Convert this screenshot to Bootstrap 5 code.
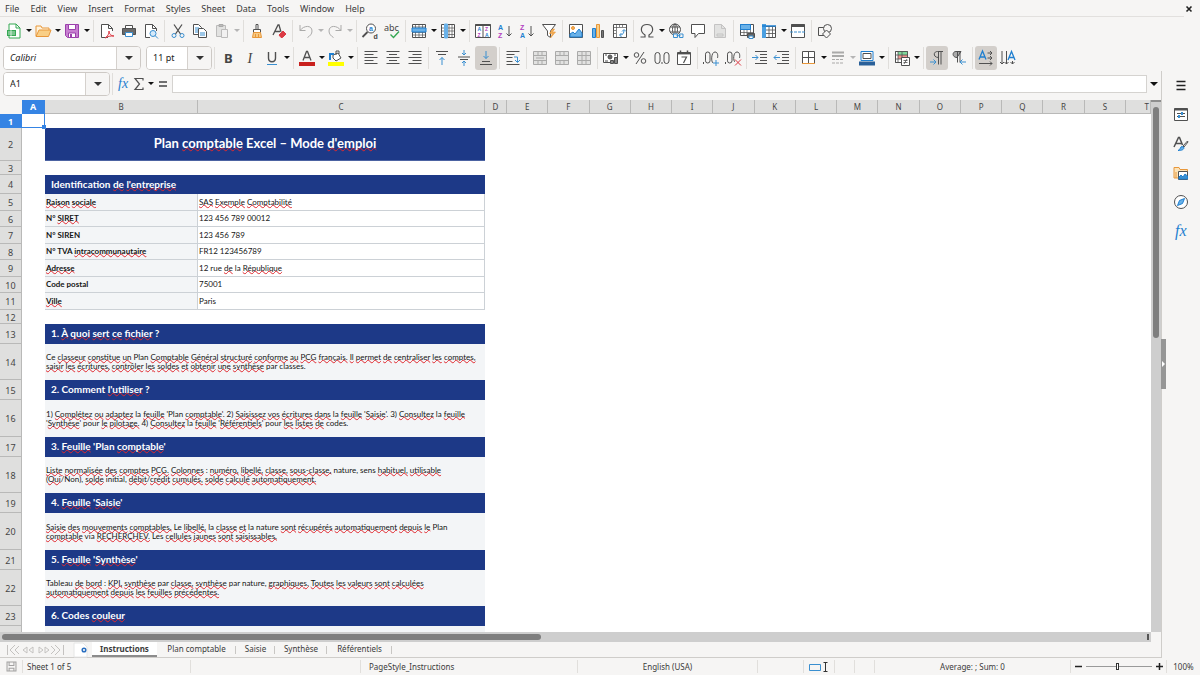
<!DOCTYPE html>
<html lang="en">
<head>
<meta charset="utf-8">
<meta name="viewport" content="width=device-width, initial-scale=1">
<title>Plan comptable - Calc</title>
<link href="https://cdn.jsdelivr.net/npm/bootstrap@5.3.0/dist/css/bootstrap.min.css" rel="stylesheet">
<style>
  :root { --chrome:#f6f5f4; --line:#d5d3d0; --ink:#3b3b3b; --sel:#3584e4; --navy:#1d3987; --soft:#f3f5f7; }
  body { font-family:"Noto Sans","Open Sans",sans-serif; font-size:9px; line-height:12px; color:var(--ink); background:var(--chrome); }
  button, input { font-family:inherit; }
  .btn { --bs-btn-padding-x:0; --bs-btn-padding-y:0; --bs-btn-border-width:0; --bs-btn-font-size:9px; --bs-btn-line-height:12px; --bs-btn-color:#3b3b3b; border-radius:3px; }
  /* menu */
  .menubar { height:17px; padding:0 6px 0 5px; gap:11px; position:relative; }
  .menubar::after { content:""; position:absolute; left:0; right:16px; bottom:0; border-bottom:1px solid #e2e0de; }
  .menubar a { color:var(--ink); text-decoration:none; }
  /* toolbars */
  .toolrow { height:27px; padding-left:3px; }
  .tool { width:22px; height:24px; display:inline-flex; align-items:center; justify-content:center; flex:none; }
  .tool.slim { width:16px; }
  .tool.active { background:#d3cfcb; }
  .tool.off { opacity:.45; }
  .ic { width:16px; height:16px; fill:none; stroke:#505050; stroke-width:1; overflow:visible; }
  .ic text { stroke:none; fill:#454545; }
  .ic .az { font-family:"Liberation Sans",sans-serif; font-size:7px; font-weight:700; }
  .ic .mini { font-family:"Liberation Sans",sans-serif; font-size:5px; font-weight:700; }
  .ic .blue { fill:#1f7fd0; } .ic .violet { fill:#b23fc0; }
  .drop { width:7px; height:24px; flex:none; display:inline-flex; align-items:center; justify-content:center; }
  .drop::after, .combo button::after { content:""; border:3px solid transparent; border-top-color:#111; border-bottom-width:0; }
  .drop.off::after { border-top-color:#b5b5b5; }
  .expand::after { border-width:4px; border-bottom-width:0; }
  .sep { width:5px; height:22px; flex:none; background:linear-gradient(#e0dedb,#e0dedb) center/1px 100% no-repeat; }
  .drop + .sep { width:6px; }
  .combo { height:24px; border:1px solid #cdc9c5; border-radius:4px; background:#fff; overflow:hidden; flex:none; }
  .combo input { border:0; outline:0; min-width:0; flex:1; padding:0 6px; font-size:9px; color:#222; background:#fff; }
  .combo button { border:0; border-left:1px solid #d5d1cd; background:var(--chrome); width:24px; flex:none; display:flex; align-items:center; justify-content:center; }
  .combo button::after { border-width:4px; border-bottom-width:0; border-top-color:#333; }
  .fontbox { width:138px; margin-right:5px; } .sizebox { width:66px; } .namebox { width:107px; }
  .formulabar { height:29px; padding:0 4px 4px 3px; }
  .formula { height:18px; border:1px solid #d5d3d0; background:#fff; border-radius:0; outline:0; min-width:0; margin:0 3px 0 2px; }
  .fx { font-family:"Liberation Serif",serif; font-style:italic; font-size:14px; }
  .fx.big { font-size:16px; }
  /* sheet */
  .fit { min-height:0; min-width:0; }
  .sheet { background:#fff; overflow:hidden; min-height:0; }
  .grid { width:100%; table-layout:fixed; border-collapse:separate; border-spacing:0; font-family:Lato,"Open Sans",sans-serif; font-size:8px; line-height:9px; color:#151515; }
  .c-head, .c-d { width:22px; } .c-a { width:23px; } .c-b { width:153px; } .c-c { width:287px; } .c-t { width:25px; }
  .grid th, .grid td { padding:0 1px; height:14px; vertical-align:middle; overflow:hidden; }
  .grid thead th, .grid tbody th { font-family:"Noto Sans",sans-serif; font-weight:400; font-size:8px; color:#454545; text-align:center; background:#dfdfde; border-right:1px solid #b9b9b8; border-bottom:1px solid #b9b9b8; }
  .grid thead th:first-child { background:var(--chrome); border-color:var(--chrome); }
  .grid tbody th { font-size:9px; padding-top:1px; }
  .grid thead th.on, .grid tbody th.on { background:var(--sel); border-color:var(--sel); color:#fff; font-weight:700; font-size:9px; }
  .grid td.cursor { border-right:1px solid var(--sel); border-bottom:1px solid var(--sel); position:relative; overflow:visible; }
  .cursor::after { content:""; position:absolute; right:-2px; bottom:-2px; width:4px; height:4px; background:var(--sel); }
  .grid .banner td.fillc { background:var(--navy); color:#fff; font-weight:700; font-size:13px; line-height:16px; text-align:center; height:33px; padding-bottom:2px; border-bottom:1px solid #4c63a2; }
  .grid .head td { height:20px; }
  .grid .head.first td { height:19px; }
  .grid .head td.fillc { background:var(--navy); color:#fff; font-weight:700; font-size:10px; line-height:12px; padding-left:6px; padding-bottom:2px; }
  .grid .field td { height:17px; }
  .grid .field:nth-child(even) td { height:16px; }
  .grid .field td.fillc { background:var(--soft); font-weight:700; }
  .grid .field td.fillc, .grid .field td.val { border-right:1px solid #ccd1d6; border-bottom:1px solid #ccd1d6; }
  .grid .note td { height:36px; }
  .grid .note:nth-child(4n) td { height:37px; }
  .grid .note td.fillc { background:var(--soft); }
  u { text-decoration:underline wavy #e0282e 1px; text-decoration-skip-ink:none; text-underline-offset:-1px; }
  .vbar { width:10px; background:#cecece; padding:5px 2px 0; border-top:2px solid #8e8e8e; }
  .vbar div { height:44%; border-radius:3px; background:#7e7e7e; }
  .hbar { height:10px; background:#cecece; padding:2px; }
  .hbar div { width:47%; height:6px; border-radius:3px; background:#7e7e7e; }
  .hbar i { width:2px; height:6px; background:#555; }
  .corner { width:10px; flex:none; }
  /* sheet tabs */
  .tabs { height:16px; font-size:8px; border-bottom:1px solid #cfcdca; }
  .tabs .ic.nav4 { width:62px; flex:none; }
  .tabs .tool { height:15px; margin-left:4px; }
  .tabs .tab { color:var(--ink); text-decoration:none; text-align:center; height:15px; line-height:14px; position:relative; }
  .tabs .tab:not(.current)::after { content:""; position:absolute; right:0; top:4px; height:8px; border-right:1px solid #c8c6c3; }
  .tabs .current { background:#fff; font-weight:700; border-bottom:2px solid #8c8c8c; width:65px; }
  .t-plan { width:79px; } .t-saisie { width:39px; } .t-syn { width:52px; } .t-ref { width:65px; }
  /* sidebar */
  .side { width:39px; flex:none; border-left:1px solid #cfcdca; position:relative; }
  .side .tool { height:29px; }
  .grip { position:absolute; left:-1px; top:calc(50% - 26px); width:5px; height:50px; background:#969696; display:flex; align-items:center; justify-content:center; }
  .grip::after { content:""; border:3px solid transparent; border-left-color:#fff; border-right-width:0; }
  /* status */
  .status { height:17px; font-size:8px; }
  .status > div { height:13px; border-right:1px solid #e1dfdc; display:flex; align-items:center; justify-content:center; }
  .status > div:last-child { border-right:0; }
  .status .ic { width:11px; height:11px; }
  .s-save { width:23px; } .s-sheet { width:168px; } .s-gap { width:170px; } .s-style { width:217px; } .s-ins { width:46px; } .s-sel { width:31px; } .s-sig { width:20px; } .s-sum { width:196px; } .s-zoom { width:96px; } .s-pct { width:33px; }
  .zoomer { appearance:none; width:66px; height:10px; background:linear-gradient(#9a9a9a,#9a9a9a) center/100% 1px no-repeat; margin:0; }
  .zoomer::-webkit-slider-thumb { appearance:none; width:3px; height:7px; border:1px solid #333; background:#fff; }
</style>
</head>
<body class="d-flex flex-column vh-100 overflow-hidden">

<nav class="menubar d-flex align-items-center flex-shrink-0" aria-label="Menu">
  <a href="#">File</a><a href="#">Edit</a><a href="#">View</a><a href="#">Insert</a><a href="#">Format</a><a href="#">Styles</a><a href="#">Sheet</a><a href="#">Data</a><a href="#">Tools</a><a href="#">Window</a><a href="#">Help</a>
  <button class="btn ms-auto" aria-label="Close document"><svg width="10" height="10" viewBox="0 0 10 10" stroke="#222" stroke-width="1.6"><path d="M2.500 2.500l5 5M7.500 2.500l-5 5"/></svg></button>
</nav>

<div class="toolrow d-flex align-items-center flex-shrink-0" role="toolbar" aria-label="Standard">
  <button class="btn tool" aria-label="New"><svg class="ic" viewBox="0 0 16 16"><path d="M3 1h7l4 4v10H3z" fill="#fff" stroke="#35a853"/><path d="M10 1v4h4" stroke="#35a853"/><path d="M1 7h9v6H1z" fill="#35a853" stroke="none"/><path d="M2 9h7M2 11h7M5 7v6" stroke="#fff" stroke-width=".7"/></svg></button><button class="btn drop" aria-label="New options"></button>
  <button class="btn tool" aria-label="Open"><svg class="ic" viewBox="0 0 16 16"><path d="M1 13V3h5l1 2h7v3" fill="#fff3dc" stroke="#e8973a"/><path d="M1 13.500L4 7h12l-2.500 6.500z" fill="#f9cf86" stroke="#e8973a"/></svg></button><button class="btn drop" aria-label="Open options"></button>
  <button class="btn tool" aria-label="Save"><svg class="ic" viewBox="0 0 16 16"><path d="M1.500 1.500h13v13h-11l-2-2z" fill="#c77fd0" stroke="#9b3fab"/><path d="M4.500 1.500h7v5h-7z" fill="#fff" stroke="#9b3fab"/><path d="M4.500 10h7v4.500h-7z" fill="#fff" stroke="#9b3fab"/><path d="M6 11h2v3H6z" fill="#9b3fab" stroke="none"/></svg></button><button class="btn drop" aria-label="Save options"></button>
  <span class="sep"></span>
  <button class="btn tool" aria-label="Export as PDF"><svg class="ic" viewBox="0 0 16 16"><path d="M9 14.500H2.500v-13h7l4 4V8" fill="#fff"/><path d="M9.500 1.500v4h4"/><path d="M6 15c3-2 4-4 4-7 0 3 2 5 5 5-4 0-6 0-9 2z" stroke="#dc3b45"/></svg></button>
  <button class="btn tool" aria-label="Print"><svg class="ic" viewBox="0 0 16 16"><path d="M4.500 5V2.500h7V5" fill="#fff"/><path d="M1.500 5.500h13v6h-13z" fill="#6a6a6a"/><path d="M4.500 9.500h7v4h-7z" fill="#fff" stroke="#3a8fd0"/></svg></button>
  <button class="btn tool" aria-label="Print preview"><svg class="ic" viewBox="0 0 16 16"><path d="M7 14.500H2.500v-13h7l4 4V8" fill="#fff"/><path d="M9.500 1.500v4h4"/><circle cx="10" cy="10.500" r="3" fill="#d6eafa" stroke="#3a8fd0"/><path d="M12 12.500l3 3" stroke="#3a8fd0"/></svg></button>
  <span class="sep"></span>
  <button class="btn tool" aria-label="Cut"><svg class="ic" viewBox="0 0 16 16"><path d="M4 1.500l6.500 9.500M12 1.500L5.500 11" stroke-width="1.300"/><circle cx="4" cy="12.500" r="2" stroke="#3a8fd0"/><circle cx="12" cy="12.500" r="2" stroke="#3a8fd0"/></svg></button>
  <button class="btn tool" aria-label="Copy"><svg class="ic" viewBox="0 0 16 16"><path d="M1.500 1.500h5l3 3v7h-8z" fill="#fff"/><path d="M6.500 5.500h5l3 3v6h-8z" fill="#fff"/><path d="M3 5h4M3 7h3M3 9h3M8 10h5M8 12h5" stroke="#3a8fd0"/></svg></button>
  <button class="btn tool off" aria-label="Paste"><svg class="ic" viewBox="0 0 16 16"><path d="M2.500 2.500h9v11h-9z" fill="#ccc" stroke="#777"/><path d="M5 1.500h4v2H5z" fill="#777"/><path d="M7.500 6.500h6v8h-6z" fill="#eee" stroke="#777"/></svg></button><button class="btn drop off" aria-label="Paste options"></button>
  <span class="sep"></span>
  <button class="btn tool" aria-label="Clone formatting"><svg class="ic" viewBox="0 0 16 16"><path d="M7 1.500h2v5H7zM4.500 6.500h7v3h-7z" fill="#fff"/><path d="M4.500 9.500h7l1 5h-9z" fill="#f7c983" stroke="#e8973a"/><path d="M6.500 11v3M9.500 11v3" stroke="#e8973a"/></svg></button>
  <button class="btn tool" aria-label="Clear formatting"><svg class="ic" viewBox="0 0 16 16"><path d="M2 12L7 2h1l2 7M4 8.500h5" stroke-width="1.300"/><path d="M8 12l4-4 3 3-3.500 3.500H10z" fill="#dc3b45" stroke="#dc3b45"/></svg></button>
  <span class="sep"></span>
  <button class="btn tool off" aria-label="Undo"><svg class="ic" viewBox="0 0 16 16"><path d="M2 2v5.500h5.500M2 7.500C6 2 14 2 14 8c0 3-2 5-4.500 6.500"/></svg></button><button class="btn drop off" aria-label="Undo list"></button>
  <button class="btn tool off" aria-label="Redo"><svg class="ic" viewBox="0 0 16 16"><path d="M14 2v5.500H8.500M14 7.500C10 2 2 2 2 8c0 3 2 5 4.500 6.500"/></svg></button><button class="btn drop off" aria-label="Redo list"></button>
  <span class="sep"></span>
  <button class="btn tool" aria-label="Find and replace"><svg class="ic" viewBox="0 0 16 16"><circle cx="9" cy="5.500" r="4.500" fill="#fff"/><path d="M5.500 9l-5 5" stroke-width="1.800"/><text class="az blue" x="7" y="7.500">a</text><text class="az" x="11.500" y="15.500">d</text></svg></button>
  <button class="btn tool" aria-label="Spelling"><svg class="ic" viewBox="0 0 16 16"><text x="0" y="8" font-size="9">abc</text><path d="M6.500 11.500l3 3 5.500-6" stroke="#35a853" stroke-width="1.400"/></svg></button>
  <span class="sep"></span>
  <button class="btn tool" aria-label="Row"><svg class="ic" viewBox="0 0 16 16"><path d="M1.500 1.500h13v13h-13z" fill="#fff"/><path d="M1.500 12h13M4.500 1.500v13M8 1.500v13M11.500 1.500v13M1.500 4h13M1.500 9.500h13" stroke-width=".7"/><path d="M1 5h14v4H1z" fill="#69b1e8" stroke="#1f7fd0"/></svg></button><button class="btn drop" aria-label="Row options"></button>
  <button class="btn tool" aria-label="Column"><svg class="ic" viewBox="0 0 16 16"><path d="M1.500 1.500h13v13h-13z" fill="#fff"/><path d="M1.500 5h13M1.500 8h13M1.500 11.500h13M12 1.500v13M9 1.500v13" stroke-width=".7"/><path d="M4.500 1h3v14h-3z" fill="#69b1e8" stroke="#69b1e8"/></svg></button><button class="btn drop" aria-label="Column options"></button>
  <span class="sep"></span>
  <button class="btn tool" aria-label="Sort"><svg class="ic" viewBox="0 0 16 16"><path d="M.5 1.500h15v13H.5zM8 2v12.500" fill="#fff"/><path d="M.5 2h15" stroke-width="2"/><text class="mini blue" x="2.500" y="7.500">A</text><text class="mini violet" x="2.500" y="13.500">Z</text><text class="mini violet" x="10" y="7.500">Z</text><text class="mini blue" x="10" y="13.500">A</text></svg></button>
  <button class="btn tool" aria-label="Sort ascending"><svg class="ic" viewBox="0 0 16 16"><text class="az blue" x="1" y="6.500">A</text><text class="az violet" x="1" y="15">Z</text><path d="M12 3v10M9.500 10.500L12 13l2.500-2.500"/></svg></button>
  <button class="btn tool" aria-label="Sort descending"><svg class="ic" viewBox="0 0 16 16"><text class="az violet" x="1" y="6.500">Z</text><text class="az blue" x="1" y="15">A</text><path d="M12 3v10M9.500 10.500L12 13l2.500-2.500"/></svg></button>
  <button class="btn tool" aria-label="AutoFilter"><svg class="ic" viewBox="0 0 16 16"><path d="M1.500 1.500h13L9.500 8v6.500l-3-2V8z" fill="#fff"/><path d="M11.500 6l-3 4.500h3L9.500 15l5-6h-3l2-3z" fill="#f5ae55" stroke="#e8973a" stroke-width=".6"/></svg></button>
  <span class="sep"></span>
  <button class="btn tool" aria-label="Image"><svg class="ic" viewBox="0 0 16 16"><path d="M1.500 1.500h13v13h-13z" fill="#fff"/><circle cx="5" cy="5" r="1.500" fill="#f5ae55" stroke="#e8973a"/><path d="M2 14v-3l3-2 2 2 4-5 3 4v4z" fill="#69b1e8" stroke="#1f7fd0"/></svg></button>
  <button class="btn tool" aria-label="Chart"><svg class="ic" viewBox="0 0 16 16"><path d="M2.500 5.500h3v9h-3z" fill="#69b1e8" stroke="#1f7fd0"/><path d="M6.500 1.500h3v13h-3z" fill="#f9cf86" stroke="#e8973a"/><path d="M11.500 7.500h2v7h-2z" fill="#777"/></svg></button>
  <button class="btn tool" aria-label="Pivot table"><svg class="ic" viewBox="0 0 16 16"><path d="M1.500 1.500h13v13h-13z" fill="#fff"/><path d="M1.500 4.500h13M4.500 1.500v13M2 7.500h2M2 10.500h2M7.500 2v2M10.500 2v2" stroke-width=".7"/><path d="M8 12c3 0 4-2 4-5M10 8.500l2-2 2 2M9.500 10L7.500 12l2 2" stroke="#3a8fd0"/></svg></button>
  <span class="sep"></span>
  <button class="btn tool" aria-label="Special character"><svg class="ic" viewBox="0 0 16 16"><path d="M1.500 14h4.500v-2C0 8 2 1.500 8 1.500S16 8 10 12v2h4.500" stroke-width="1.200"/></svg></button><button class="btn drop" aria-label="Special character options"></button>
  <button class="btn tool" aria-label="Hyperlink"><svg class="ic" viewBox="0 0 16 16"><circle cx="7" cy="6.500" r="5.500" fill="#fff"/><ellipse cx="7" cy="6.500" rx="2.500" ry="5.500"/><path d="M2 4h10M2 9h10M7 1v11"/><path d="M6 11h3.500v3.500H5.500V11zM11.500 11H15v3.500h-3.500zM8.500 12.700h4" fill="#f6f5f4" stroke="#3a8fd0"/></svg></button>
  <button class="btn tool" aria-label="Comment"><svg class="ic" viewBox="0 0 16 16"><path d="M1.500 1.500h13v9h-6L5 14.500v-4H1.500z" fill="#fff"/></svg></button>
  <button class="btn tool off" aria-label="Headers and footers"><svg class="ic" viewBox="0 0 16 16"><path d="M2.500 1.500h7l4 4v9h-11z" fill="#ccc" stroke="#888"/><path d="M9.500 1.500v4h4M5 11h6v2H5z" stroke="#888"/></svg></button>
  <span class="sep"></span>
  <button class="btn tool" aria-label="Print area"><svg class="ic" viewBox="0 0 16 16"><path d="M1.500 1.500h13v11h-13z" fill="#fff"/><path d="M1.500 9.500h13M5 7v6M8 1.500v11M11.500 1.500v11" stroke-width=".7"/><path d="M1.500 1.500h10v5h-10z" fill="#69b1e8" stroke="#1f7fd0"/><path d="M8.500 10.500h7v4h-7z" fill="#666"/><path d="M10 13h4v2.500h-4z" fill="#fff" stroke="#3a8fd0"/></svg></button>
  <button class="btn tool" aria-label="Freeze"><svg class="ic" viewBox="0 0 16 16"><path d="M1.500 3.500h13v11h-13z" fill="#fff"/><path d="M1.500 7h13M1.500 10.500h13M8 4v10.500M11.500 4v10.500" stroke-width=".8"/><path d="M1 1h4v14H1z" fill="#4a9fe0" stroke="none"/><path d="M1 3h14" stroke="#1f7fd0" stroke-width="1.500"/></svg></button><button class="btn drop" aria-label="Freeze options"></button>
  <button class="btn tool" aria-label="Split window"><svg class="ic" viewBox="0 0 16 16"><path d="M1.500 1.500h13v13h-13z" fill="#fff"/><path d="M1.500 2.500h13" stroke-width="3"/><path d="M0 9h16" stroke="#3a8fd0" stroke-dasharray="3 1"/></svg></button>
  <span class="sep"></span>
  <button class="btn tool" aria-label="Draw functions"><svg class="ic" viewBox="0 0 16 16"><path d="M1.500 4.500h7v8h-7z" fill="#f6f5f4"/><circle cx="10.500" cy="5.500" r="4" fill="#f6f5f4"/><path d="M9.500 7l4 4-4 4-4-4z" fill="#f6f5f4"/></svg></button>
</div>

<div class="toolrow d-flex align-items-center flex-shrink-0" role="toolbar" aria-label="Formatting">
  <div class="combo fontbox d-flex"><input aria-label="Font name" value="Calibri" class="fst-italic"><button aria-label="Font list"></button></div>
  <div class="combo sizebox d-flex"><input aria-label="Font size" value="11 pt"><button aria-label="Size list"></button></div>
  <span class="sep"></span>
  <button class="btn tool" aria-label="Bold"><svg class="ic" viewBox="0 0 16 16"><text x="4" y="12.500" font-size="13" font-weight="700">B</text></svg></button>
  <button class="btn tool" aria-label="Italic"><svg class="ic" viewBox="0 0 16 16"><text x="5.500" y="12.500" font-size="14" font-style="italic" font-family="Liberation Serif">I</text></svg></button>
  <button class="btn tool" aria-label="Underline"><svg class="ic" viewBox="0 0 16 16"><path d="M4.500 2v6c0 5 7 5 7 0V2" stroke-width="1.400"/><path d="M3 14.500h10" stroke="#3a8fd0"/></svg></button><button class="btn drop" aria-label="Underline options"></button>
  <span class="sep"></span>
  <button class="btn tool" aria-label="Font color"><svg class="ic" viewBox="0 0 16 16"><path d="M4 10.500L7.500 1.500h1L12 10.500M5.500 7.500h5" stroke-width="1.300"/><path d="M0 12h16v4H0z" fill="#c9211e" stroke="none"/></svg></button><button class="btn drop" aria-label="Font color options"></button>
  <button class="btn tool" aria-label="Background color"><svg class="ic" viewBox="0 0 16 16"><path d="M5 5l5-2 3 5-5 3-3-3z" fill="#fff"/><path d="M8 5V1h3v3"/><path d="M2 10V4h4" stroke="#1f7fd0" stroke-width="2"/><path d="M0 12h16v4H0z" fill="#ff0" stroke="none"/></svg></button><button class="btn drop" aria-label="Background color options"></button>
  <span class="sep"></span>
  <button class="btn tool" aria-label="Align left"><svg class="ic" viewBox="0 0 16 16"><path d="M1.500 1.500h13M1.500 4.500h9M1.500 7.500h13M1.500 10.500h9M1.500 13.500h13"/></svg></button>
  <button class="btn tool" aria-label="Center"><svg class="ic" viewBox="0 0 16 16"><path d="M1.500 1.500h13M4 4.500h8M1.500 7.500h13M4 10.500h8M1.500 13.500h13"/></svg></button>
  <button class="btn tool" aria-label="Align right"><svg class="ic" viewBox="0 0 16 16"><path d="M1.500 1.500h13M5.500 4.500h9M1.500 7.500h13M5.500 10.500h9M1.500 13.500h13"/></svg></button>
  <span class="sep"></span>
  <button class="btn tool" aria-label="Align top"><svg class="ic" viewBox="0 0 16 16"><path d="M2 1.500h12M4 4.500h8"/><path d="M8 15V7.500M5.500 10L8 7.500l2.500 2.500" stroke="#3a8fd0"/></svg></button>
  <button class="btn tool" aria-label="Center vertically"><svg class="ic" viewBox="0 0 16 16"><path d="M2 7h12M4 9.500h8"/><path d="M8 0v5M6 3l2 2 2-2M8 16v-5M6 13l2-2 2 2" stroke="#3a8fd0"/></svg></button>
  <button class="btn tool active" aria-label="Align bottom"><svg class="ic" viewBox="0 0 16 16"><path d="M4 11.500h8M2 14.500h12"/><path d="M8 1v7.500M5.500 6L8 8.500 10.500 6" stroke="#3a8fd0"/></svg></button>
  <span class="sep"></span>
  <button class="btn tool" aria-label="Wrap text"><svg class="ic" viewBox="0 0 16 16"><path d="M1.500 1.500h13M1.500 4.500h8M1.500 7.500h6M1.500 11.500h6M1.500 14.500h13"/><path d="M9 7h3.500v5M10 10l2.500 2.500L15 10" stroke="#3a8fd0"/></svg></button>
  <span class="sep"></span>
  <button class="btn tool off" aria-label="Merge and center"><svg class="ic" viewBox="0 0 16 16"><path d="M1.500 1.500h13v13h-13z" fill="#ccc"/><path d="M1.500 5.500h13M1.500 10.500h13M6 1.500v4M10 1.500v4M6 10.500v4M10 10.500v4M4 8h8"/></svg></button>
  <button class="btn tool off" aria-label="Merge cells"><svg class="ic" viewBox="0 0 16 16"><path d="M1.500 1.500h13v13h-13z" fill="#ccc"/><path d="M1.500 5.500h13M1.500 10.500h13M6 1.500v4M10 1.500v4M6 10.500v4M10 10.500v4"/></svg></button>
  <button class="btn tool off" aria-label="Unmerge cells"><svg class="ic" viewBox="0 0 16 16"><path d="M1.500 1.500h13v13h-13z" fill="#ccc"/><path d="M1.500 5.500h13M1.500 10.500h13M6 1.500v13M10 1.500v13"/></svg></button>
  <span class="sep"></span>
  <button class="btn tool" aria-label="Currency"><svg class="ic" viewBox="0 0 16 16"><path d="M.5 3.500h14v9H.5z" fill="#fff"/><circle cx="7" cy="7" r="2" fill="#666"/><path d="M2 5h2M11 5h2M2 11h3"/><path d="M7.500 10.500h3v3h-3zM11.500 7.500h3v6h-3z" fill="#888"/></svg></button><button class="btn drop" aria-label="Currency options"></button>
  <button class="btn tool" aria-label="Percent"><svg class="ic" viewBox="0 0 16 16"><circle cx="4.500" cy="5" r="2.300"/><circle cx="11.500" cy="11" r="2.300"/><path d="M12 2L4 14"/></svg></button>
  <button class="btn tool" aria-label="Number"><svg class="ic" viewBox="0 0 16 16"><rect x="1" y="2.500" width="5" height="11" rx="2.500"/><rect x="10" y="2.500" width="5" height="11" rx="2.500"/><path d="M8 12v2"/></svg></button>
  <button class="btn tool" aria-label="Date"><svg class="ic" viewBox="0 0 16 16"><path d="M1.500 2.500h13v12h-13z" fill="#fff"/><path d="M1.500 3.500h13" stroke-width="1.800"/><path d="M4.500 .5v3M11.500 .5v3" stroke-width="1.500"/><path d="M5.500 7h5l-3 6" stroke-width="1.200"/></svg></button>
  <span class="sep"></span>
  <button class="btn tool" aria-label="Add decimal place"><svg class="ic" viewBox="0 0 16 16"><rect x="2.500" y="2" width="4.500" height="11" rx="2.200"/><path d="M10 13c-2-1-2-11 2-11 3 0 3 4 2.500 6M.5 12v2"/><path d="M10 13h6M13 10v6" stroke="#3a8fd0"/></svg></button>
  <button class="btn tool" aria-label="Delete decimal place"><svg class="ic" viewBox="0 0 16 16"><rect x="2.500" y="2" width="4.500" height="11" rx="2.200"/><path d="M10 12c-2-1-2-10 2-10 3 0 3 4 2.500 6M.5 12v2"/><path d="M10 9.500l6 6M16 9.500l-6 6" stroke="#dc3b45"/></svg></button>
  <span class="sep"></span>
  <button class="btn tool" aria-label="Increase indent"><svg class="ic" viewBox="0 0 16 16"><path d="M3 1.500h12M8 4.500h7M8 7.500h7M8 10.500h7M3 13.500h12"/><path d="M0 7.500h6M3.500 5L6 7.500 3.500 10" stroke="#3a8fd0"/></svg></button>
  <button class="btn tool" aria-label="Decrease indent"><svg class="ic" viewBox="0 0 16 16"><path d="M3 1.500h12M8 4.500h7M8 7.500h7M8 10.500h7M3 13.500h12"/><path d="M0 7.500h6M2.500 5L0 7.500 2.500 10" stroke="#3a8fd0"/></svg></button>
  <span class="sep"></span>
  <button class="btn tool" aria-label="Borders"><svg class="ic" viewBox="0 0 16 16"><path d="M1.500 1.500h12v12h-12z" fill="#fff"/><path d="M7.500 1.500v12M1.500 7.500h12"/><path d="M1 13.500h13" stroke="#e8973a"/></svg></button><button class="btn drop" aria-label="Border options"></button>
  <button class="btn tool off" aria-label="Border style"><svg class="ic" viewBox="0 0 16 16"><path d="M2 2.500h12M2 6h12" stroke-width="2"/><path d="M2 9.500h12M2 13h12" stroke-dasharray="3 1"/></svg></button><button class="btn drop off" aria-label="Border style options"></button>
  <button class="btn tool" aria-label="Border color"><svg class="ic" viewBox="0 0 16 16"><path d="M2 1.500h12v9H2z" fill="#fff" stroke="#1f7fd0"/><path d="M4 3.500h8v5H4z"/><path d="M0 11.500h16v4H0z" fill="#2a6099" stroke="none"/></svg></button><button class="btn drop" aria-label="Border color options"></button>
  <span class="sep"></span>
  <button class="btn tool" aria-label="Conditional formatting"><svg class="ic" viewBox="0 0 16 16"><path d="M1.500 1.500h12v11h-12z" fill="#fff"/><path d="M4 1.500h9.500V5H4z" fill="#7fd79a" stroke="none"/><path d="M4 5h9.500v4H4z" fill="#f0948f" stroke="none"/><path d="M1.500 1.500h12v11h-12zM4 1.500v11M8 1.500v11M1.500 5h12M1.500 9h12" stroke-width=".8"/><path d="M7.500 7.500h8v8h-8z" fill="#fff"/><path d="M9.500 10.500h4M9.500 12.500h4M13 9l-3 5" stroke-width=".8"/></svg></button><button class="btn drop" aria-label="Conditional formatting options"></button>
  <span class="sep"></span>
  <button class="btn tool active" aria-label="Left to right"><svg class="ic" viewBox="0 0 16 16"><path d="M14 1.500H8.500C4 1.500 4 7.500 9.500 7.500M9.500 1.500v13M12 1.500v13"/><path d="M1 12h6M4.500 9.500L7 12l-2.500 2.500" stroke="#3a8fd0"/></svg></button>
  <button class="btn tool" aria-label="Right to left"><svg class="ic" viewBox="0 0 16 16"><path d="M10 1.500H5C1 1.500 1 7.500 6 7.500z" fill="#aaa"/><path d="M6.500 1.500v11M9 1.500v11"/><path d="M9 12h6M11.500 9.500L9 12l2.500 2.500" stroke="#3a8fd0"/></svg></button>
  <span class="sep"></span>
  <button class="btn tool active" aria-label="Text direction from left to right"><svg class="ic" viewBox="0 0 16 16"><path d="M1 9.500L4.500 1 8 9.500M2 7h5" stroke="#1f7fd0" stroke-width="1.300"/><path d="M9.500 3H14M12 1l2 2-2 2M9.500 8H14M12 6l2 2-2 2M1 13.500h13M12 11.500l2 2-2 2"/></svg></button>
  <button class="btn tool" aria-label="Text direction from top to bottom"><svg class="ic" viewBox="0 0 16 16"><path d="M8 10L11.500 1.500 15 10M9 7.500h5" stroke="#1f7fd0" stroke-width="1.300"/><path d="M2 1v13M0 12l2 2 2-2M6.500 1v13M4.500 12l2 2 2-2M12.500 11v3M10.500 12l2 2 2-2"/></svg></button>
</div>

<div class="d-flex flex-grow-1 fit">
  <main class="d-flex flex-column flex-grow-1 fit">
    <div class="formulabar d-flex align-items-center flex-shrink-0">
      <div class="combo namebox d-flex"><input aria-label="Name box" value="A1"><button aria-label="Name list"></button></div>
      <span class="sep"></span>
      <button class="btn tool slim" aria-label="Function wizard"><svg class="ic" viewBox="0 0 16 16"><text class="fx blue" x="3" y="12">fx</text></svg></button>
      <button class="btn tool slim" aria-label="Select function"><svg class="ic" viewBox="0 0 16 16"><path d="M12 4.500v-2H4L8.500 8 4 13.500h8v-2" stroke-width="1.200"/></svg></button><button class="btn drop" aria-label="Function list"></button>
      <button class="btn tool slim" aria-label="Formula"><svg class="ic" viewBox="0 0 16 16"><path d="M5 6h8M5 10h8" stroke="#444" stroke-width="1.600"/></svg></button>
      <input class="formula flex-grow-1" aria-label="Input line">
      <button class="btn drop expand" aria-label="Expand formula bar"></button>
    </div>
    <div class="d-flex flex-grow-1 fit">
      <div class="sheet flex-grow-1">
        <table class="grid">
          <colgroup><col class="c-head"><col class="c-a"><col class="c-b"><col class="c-c"><col class="c-d"><col span="15"><col class="c-t"></colgroup>
          <thead><tr><th></th><th class="on">A</th><th>B</th><th>C</th><th>D</th><th>E</th><th>F</th><th>G</th><th>H</th><th>I</th><th>J</th><th>K</th><th>L</th><th>M</th><th>N</th><th>O</th><th>P</th><th>Q</th><th>R</th><th>S</th><th class="text-end">T</th></tr></thead>
          <tbody>
            <tr><th class="on">1</th><td class="cursor"></td><td colspan="19"></td></tr>
            <tr class="banner"><th>2</th><td></td><td class="fillc" colspan="2">Plan <u>comptable</u> Excel – Mode <u>d'emploi</u></td></tr>
            <tr><th>3</th><td></td></tr>
            <tr class="head first"><th>4</th><td></td><td class="fillc" colspan="2">Identification <u>de</u> <u>l'entreprise</u></td></tr>
            <tr class="field"><th>5</th><td></td><td class="fillc"><u>Raison</u> <u>sociale</u></td><td class="val"><u>SAS</u> <u>Exemple</u> <u>Comptabilité</u></td></tr>
            <tr class="field"><th>6</th><td></td><td class="fillc">N° <u>SIRET</u></td><td class="val">123 456 789 00012</td></tr>
            <tr class="field"><th>7</th><td></td><td class="fillc">N° SIREN</td><td class="val">123 456 789</td></tr>
            <tr class="field"><th>8</th><td></td><td class="fillc">N° TVA <u>intracommunautaire</u></td><td class="val">FR12 123456789</td></tr>
            <tr class="field"><th>9</th><td></td><td class="fillc"><u>Adresse</u></td><td class="val">12 rue <u>de</u> la <u>République</u></td></tr>
            <tr class="field"><th>10</th><td></td><td class="fillc">Code postal</td><td class="val">75001</td></tr>
            <tr class="field"><th>11</th><td></td><td class="fillc"><u>Ville</u></td><td class="val">Paris</td></tr>
            <tr><th>12</th><td></td></tr>
            <tr class="head"><th>13</th><td></td><td class="fillc" colspan="2">1. <u>À</u> <u>quoi</u> <u>sert</u> <u>ce</u> <u>fichier</u> ?</td></tr>
            <tr class="note"><th>14</th><td></td><td class="fillc" colspan="2">Ce <u>classeur</u> <u>constitue</u> <u>un</u> Plan <u>Comptable</u> <u>Général</u> <u>structuré</u> <u>conforme</u> <u>au</u> <u>PCG</u> <u>français.</u> <u>Il</u> <u>permet</u> <u>de</u> <u>centraliser</u> <u>les</u> <u>comptes,</u><br><u>saisir</u> <u>les</u> <u>écritures,</u> <u>contrôler</u> <u>les</u> <u>soldes</u> <u>et</u> <u>obtenir</u> <u>une</u> <u>synthèse</u> par classes.</td></tr>
            <tr class="head"><th>15</th><td></td><td class="fillc" colspan="2">2. Comment <u>l'utiliser</u> ?</td></tr>
            <tr class="note"><th>16</th><td></td><td class="fillc" colspan="2">1) <u>Complétez</u> <u>ou</u> <u>adaptez</u> la <u>feuille</u> 'Plan <u>comptable</u>'. 2) <u>Saisissez</u> <u>vos</u> <u>écritures</u> <u>dans</u> la <u>feuille</u> '<u>Saisie</u>'. 3) <u>Consultez</u> la <u>feuille</u><br>'<u>Synthèse</u>' pour <u>le</u> <u>pilotage.</u> 4) <u>Consultez</u> la <u>feuille</u> '<u>Référentiels</u>' pour <u>les</u> <u>listes</u> <u>de</u> codes.</td></tr>
            <tr class="head"><th>17</th><td></td><td class="fillc" colspan="2">3. <u>Feuille</u> 'Plan <u>comptable</u>'</td></tr>
            <tr class="note"><th>18</th><td></td><td class="fillc" colspan="2"><u>Liste</u> <u>normalisée</u> <u>des</u> <u>comptes</u> <u>PCG.</u> <u>Colonnes</u> : <u>numéro,</u> <u>libellé,</u> <u>classe,</u> <u>sous-classe,</u> nature, sens <u>habituel,</u> <u>utilisable</u><br>(<u>Oui</u>/Non), <u>solde</u> initial, <u>débit</u>/<u>crédit</u> <u>cumulés,</u> <u>solde</u> <u>calculé</u> <u>automatiquement.</u></td></tr>
            <tr class="head"><th>19</th><td></td><td class="fillc" colspan="2">4. <u>Feuille</u> '<u>Saisie</u>'</td></tr>
            <tr class="note"><th>20</th><td></td><td class="fillc" colspan="2"><u>Saisie</u> <u>des</u> <u>mouvements</u> <u>comptables.</u> Le <u>libellé,</u> la <u>classe</u> <u>et</u> la nature <u>sont</u> <u>récupérés</u> <u>automatiquement</u> <u>depuis</u> <u>le</u> Plan<br><u>comptable</u> via <u>RECHERCHEV.</u> Les <u>cellules</u> <u>jaunes</u> <u>sont</u> <u>saisissables.</u></td></tr>
            <tr class="head"><th>21</th><td></td><td class="fillc" colspan="2">5. <u>Feuille</u> '<u>Synthèse</u>'</td></tr>
            <tr class="note"><th>22</th><td></td><td class="fillc" colspan="2">Tableau <u>de</u> <u>bord</u> : <u>KPI,</u> <u>synthèse</u> par <u>classe,</u> <u>synthèse</u> par nature, <u>graphiques.</u> <u>Toutes</u> <u>les</u> <u>valeurs</u> <u>sont</u> <u>calculées</u><br><u>automatiquement</u> <u>depuis</u> <u>les</u> <u>feuilles</u> <u>précédentes.</u></td></tr>
            <tr class="head"><th>23</th><td></td><td class="fillc" colspan="2">6. Codes <u>couleur</u></td></tr>
            <tr class="note"><th></th><td></td><td class="fillc" colspan="2"></td></tr>
          </tbody>
        </table>
      </div>
      <div class="vbar flex-shrink-0"><div></div></div>
    </div>
    <div class="d-flex flex-shrink-0">
      <div class="hbar flex-grow-1 d-flex justify-content-between"><div></div><i></i></div><span class="corner"></span>
    </div>
    <div class="tabs d-flex flex-shrink-0 ps-1">
      <svg class="ic nav4" viewBox="0 0 62 16" aria-hidden="true"><path d="M3.500 3v10M11 3L6 8l5 5M15 4l-4 4 4 4M23 5l-4 3 4 3zM29 5l-4 3 4 3zM35 5l4 3-4 3zM41 5l4 3-4 3zM51 3l5 5-5 5M47 4l4 4-4 4M59.500 3v10" stroke="#c4c2c0"/></svg>
      <button class="btn tool" aria-label="Add sheet"><svg class="ic" viewBox="0 0 16 16"><path d="M1 1h9l4 4v10H1z" fill="#fff" stroke="#e6e6e6"/><circle cx="11" cy="8" r="1.800" fill="#fff" stroke="#2a6fc0" stroke-width="1.500"/></svg></button>
      <a href="#" class="tab current">Instructions</a><a href="#" class="tab t-plan">Plan comptable</a><a href="#" class="tab t-saisie">Saisie</a><a href="#" class="tab t-syn">Synthèse</a><a href="#" class="tab t-ref">Référentiels</a>
    </div>
  </main>
  <aside class="side d-flex flex-column align-items-center">
    <button class="btn tool" aria-label="Sidebar settings"><svg class="ic" viewBox="0 0 16 16"><path d="M3.500 3.500h9M3.500 7.500h9M3.500 11.500h9" stroke="#222" stroke-width="1.400"/></svg></button>
    <button class="btn tool" aria-label="Properties"><svg class="ic" viewBox="0 0 16 16"><path d="M1.500 1.500h13v12h-13z" fill="#fff"/><path d="M1.500 2.500h13" stroke-width="2"/><path d="M4 6.500h8M4 9.500h8"/><path d="M9 5v3M6 8v3" stroke="#3a8fd0" stroke-width="2"/></svg></button>
    <button class="btn tool" aria-label="Styles"><svg class="ic" viewBox="0 0 16 16"><path d="M1 11L5.500 1.500h1L9.500 9M3 7.500h5.500" stroke-width="1.500"/><path d="M14.500 5L10 10l1 1 4-5z" fill="#fff"/><path d="M5 14.500c4 0 6-1 6-3l-2-1c-2 0-1 3-4 4z" fill="#69b1e8" stroke="#1f7fd0"/></svg></button>
    <button class="btn tool" aria-label="Gallery"><svg class="ic" viewBox="0 0 16 16"><path d="M1 13V2.500h5l1 2h7.500V13z" fill="#fbe2b8" stroke="#e8973a"/><path d="M5.500 6.500h9v8h-9z" fill="#fff"/><path d="M6 14v-2l2-2 2 2 2-3 2.500 2v3z" fill="#3a8fd0" stroke="#1f7fd0"/><path d="M3 7v6" stroke="#e8973a"/></svg></button>
    <button class="btn tool" aria-label="Navigator"><svg class="ic" viewBox="0 0 16 16"><circle cx="8" cy="8" r="6.500" fill="#fff"/><path d="M11.500 4.500L9.500 9.500l-5 2 2-5z" fill="#69b1e8" stroke="#1f7fd0"/></svg></button>
    <button class="btn tool" aria-label="Functions"><svg class="ic" viewBox="0 0 16 16"><text class="fx big blue" x="2" y="13">fx</text></svg></button>
    <span class="grip"></span>
  </aside>
</div>

<footer class="status d-flex align-items-center flex-shrink-0">
  <div class="s-save"><svg class="ic opacity-50" viewBox="0 0 16 16"><path d="M1.500 1.500h13v13h-13zM4.500 1.500v5h7v-5M4.500 14.500v-4h7v4" stroke-width="1.500"/></svg></div>
  <div class="s-sheet justify-content-start ps-1">Sheet 1 of 5</div>
  <div class="s-gap"></div>
  <div class="s-style justify-content-start ps-2">PageStyle_Instructions</div>
  <div class="flex-grow-1">English (USA)</div>
  <div class="s-ins"></div>
  <div class="s-sel"><svg width="20" height="12" viewBox="0 0 20 12" fill="none"><path d="M.5 3.500h11v6H.5z" stroke="#3a8fd0"/><path d="M14.500 1.500h4M16.500 1.500v9M14.500 10.500h4" stroke="#333"/></svg></div>
  <div class="s-sig"></div><div class="s-sig"></div>
  <div class="s-sum">Average: ; Sum: 0</div>
  <div class="s-zoom gap-1"><svg width="7" height="7" stroke="#222" stroke-width="1.500"><path d="M0 3.500h7"/></svg><input type="range" class="zoomer" aria-label="Zoom" value="48"><svg width="7" height="7" stroke="#222" stroke-width="1.500"><path d="M0 3.500h7M3.500 0v7"/></svg></div>
  <div class="s-pct">100%</div>
</footer>
<script src="https://cdn.jsdelivr.net/npm/bootstrap@5.3.0/dist/js/bootstrap.bundle.min.js"></script>
</body>
</html>
